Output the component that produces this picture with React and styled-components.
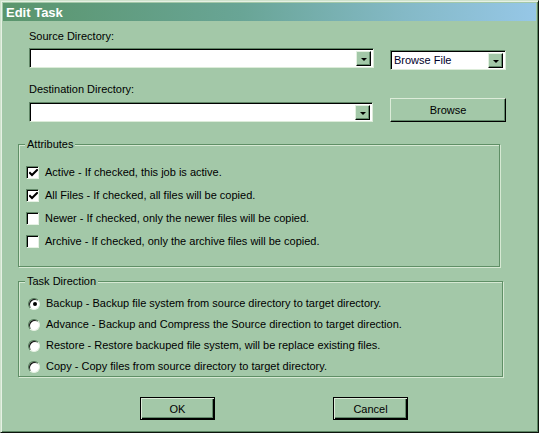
import React from "react";
import styled, { createGlobalStyle } from "styled-components";

const Global = createGlobalStyle`
  html, body { margin: 0; padding: 0; background: #a3c8a8; }
  body { font-family: "Liberation Sans", Arial, sans-serif; font-size: 11px; color: #000; }
`;

const BG = "#a3c8a8";

const Window = styled.div`
  width: 539px;
  height: 433px;
  box-sizing: border-box;
  background: ${BG};
  border: 1px solid;
  border-color: #cfe2cc #0c140c #0c140c #cfe2cc;
  padding: 2px 2px 2px 2px;
  box-shadow: inset 1px 1px #e6f1e4, inset -1px -1px #5b8562;
  display: flex;
  flex-direction: column;
`;

const TitleBar = styled.div`
  height: 18px;
  display: flex;
  align-items: center;
  padding-left: 3px;
  background: linear-gradient(to right, #5a956c 0%, #69a596 45%, #84b9c6 75%, #96c7e7 100%);
  color: #fff;
  font-weight: bold;
  font-size: 13px;
`;

const Body = styled.div`
  padding-left: 15px;
  display: flex;
  flex-direction: column;
`;

const Top = styled.div`
  padding-left: 11px;
  display: flex;
  flex-direction: column;
`;

const Label = styled.div`
  line-height: 14px;
  height: 14px;
  margin-top: ${(p) => p.$mt}px;
`;

const Row = styled.div`
  display: flex;
  align-items: flex-start;
  margin-top: ${(p) => p.$mt}px;
`;

const Combo = styled.div`
  box-sizing: border-box;
  width: ${(p) => p.$w}px;
  height: ${(p) => p.$h || 20}px;
  margin-top: ${(p) => p.$mt || 0}px;
  margin-left: ${(p) => p.$ml || 0}px;
  background: #fff;
  border: 1px solid;
  border-color: #5f8565 #dcecd9 #dcecd9 #5f8565;
  box-shadow: inset 1px 1px #000;
  display: flex;
  align-items: stretch;
  padding: 2px 2px 1px 2px;
`;

const ComboText = styled.div`
  flex: 1;
  line-height: 15px;
  padding-left: 1px;
  color: #00002a;
`;

const DropBtn = styled.div`
  box-sizing: border-box;
  width: 15px;
  background: ${BG};
  border: 1px solid;
  border-color: #e2f0e0 #000 #000 #e2f0e0;
  box-shadow: inset -1px -1px #62896a;
  display: flex;
  align-items: center;
  justify-content: center;
`;

const Arrow = styled.div`
  width: 0;
  height: 0;
  border-left: 3px solid transparent;
  border-right: 3px solid transparent;
  border-top: 3px solid #000;
  margin-top: 1px;
`;

const Button = styled.div`
  box-sizing: border-box;
  width: ${(p) => p.$w}px;
  height: ${(p) => p.$h}px;
  margin-left: ${(p) => p.$ml || 0}px;
  background: ${BG};
  border: 1px solid;
  border-color: ${(p) => (p.$framed ? "#000" : "#dcecd9 #000 #000 #dcecd9")};
  box-shadow: ${(p) =>
    p.$framed
      ? "inset 1px 1px #dcecd9, inset -1px -1px #000, inset -2px -2px #62896a"
      : "inset -1px -1px #62896a"};
  display: flex;
  align-items: center;
  justify-content: center;
  font-size: 11px;
`;

const Group = styled.div`
  position: relative;
  box-sizing: border-box;
  width: ${(p) => p.$w}px;
  height: ${(p) => p.$h}px;
  margin-top: ${(p) => p.$mt}px;
  border: 1px solid #5f8f66;
  box-shadow: 1px 1px #d6e9d3, inset 1px 1px #d6e9d3;
  display: flex;
  flex-direction: column;
  padding: ${(p) => p.$pad};
  gap: ${(p) => p.$gap}px;
`;

const Legend = styled.span`
  position: absolute;
  top: -8px;
  left: 6px;
  padding: 0 2px 0 2px;
  background: ${BG};
  line-height: 14px;
`;

const Option = styled.div`
  display: flex;
  align-items: center;
  height: 13px;
  gap: ${(p) => p.$gap}px;
  line-height: 13px;
  white-space: nowrap;
`;

const CheckBox = styled.div`
  box-sizing: border-box;
  width: 13px;
  height: 13px;
  background: #fff;
  border: 1px solid;
  border-color: #5f8565 #e6f2e4 #e6f2e4 #5f8565;
  box-shadow: inset 1px 1px #000;
  display: flex;
  align-items: center;
  justify-content: center;
`;

const Radio = styled.div`
  box-sizing: border-box;
  width: 12px;
  height: 12px;
  border-radius: 50%;
  background: #fff;
  border: 1px solid;
  border-color: #4f7555 #e6f2e4 #e6f2e4 #4f7555;
  box-shadow: inset 1px 1px #111;
  display: flex;
  align-items: center;
  justify-content: center;
`;

const Dot = styled.div`
  width: 4px;
  height: 4px;
  border-radius: 50%;
  background: #000;
  margin: 1px 0 0 1px;
`;

const ButtonRow = styled.div`
  display: flex;
  margin-top: 20px;
  padding-left: 122px;
`;

const Check = () => (
  <svg width="9" height="9" viewBox="0 0 9 9" style={{ marginLeft: 1, marginTop: 1 }}>
    <path d="M1 4 L3 6 L8 1" fill="none" stroke="#000" strokeWidth="2" strokeLinecap="square" />
  </svg>
);

const attributes = [
  ["Active - If checked, this job is active.", true],
  ["All Files - If checked, all files will be copied.", true],
  ["Newer - If checked, only the newer files will be copied.", false],
  ["Archive - If checked, only the archive files will be copied.", false],
];

const directions = [
  ["Backup - Backup file system from source directory to target directory.", true],
  ["Advance - Backup and Compress the Source direction to target direction.", false],
  ["Restore - Restore backuped file system, will be replace existing files.", false],
  ["Copy - Copy files from source directory to target directory.", false],
];

export default function App() {
  return (
    <>
      <Global />
      <Window>
        <TitleBar>Edit Task</TitleBar>
        <Body>
          <Top>
            <Label $mt={8}>Source Directory:</Label>
            <Row $mt={5}>
              <Combo $w={345}>
                <ComboText />
                <DropBtn>
                  <Arrow />
                </DropBtn>
              </Combo>
              <Combo $w={116} $ml={16} $mt={2}>
                <ComboText>Browse File</ComboText>
                <DropBtn>
                  <Arrow />
                </DropBtn>
              </Combo>
            </Row>
            <Label $mt={12}>Destination Directory:</Label>
            <Row $mt={2}>
              <Combo $w={344} $mt={4}>
                <ComboText />
                <DropBtn>
                  <Arrow />
                </DropBtn>
              </Combo>
              <Button $w={116} $h={24} $ml={17}>
                Browse
              </Button>
            </Row>
          </Top>
          <Group $w={482} $h={123} $mt={22} $pad="21px 0 0 7px" $gap={10}>
            <Legend>Attributes</Legend>
            {attributes.map(([t, c]) => (
              <Option key={t} $gap={6}>
                <CheckBox>{c && <Check />}</CheckBox>
                <span>{t}</span>
              </Option>
            ))}
          </Group>
          <Group $w={485} $h={96} $mt={14} $pad="15px 0 0 9px" $gap={8}>
            <Legend>Task Direction</Legend>
            {directions.map(([t, c]) => (
              <Option key={t} $gap={6}>
                <Radio>{c && <Dot />}</Radio>
                <span>{t}</span>
              </Option>
            ))}
          </Group>
          <ButtonRow>
            <Button $w={75} $h={23} $framed>
              OK
            </Button>
            <Button $w={75} $h={23} $ml={118} $framed>
              Cancel
            </Button>
          </ButtonRow>
        </Body>
      </Window>
    </>
  );
}
